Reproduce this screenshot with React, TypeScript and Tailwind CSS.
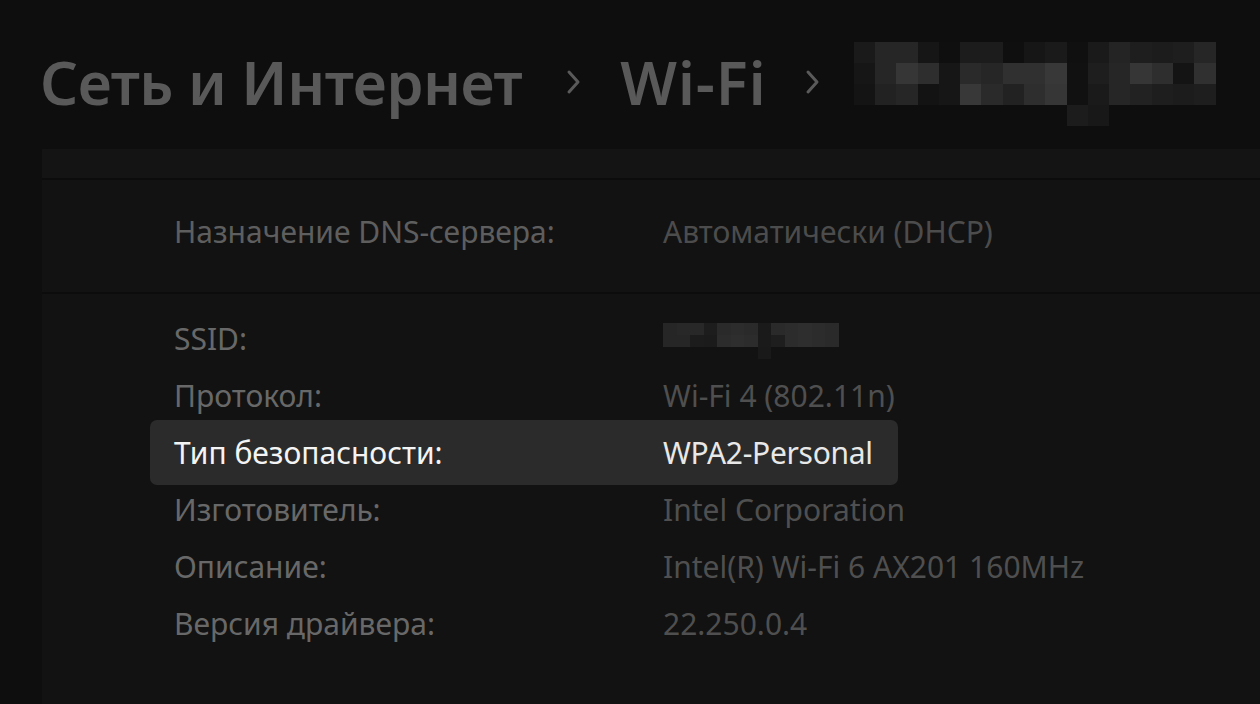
import React from 'react';

// пиксельная "замазка" имени сети в заголовке (17 x 3 + хвостик)
const headerBlur: string[][] = [
  ['#1a1a1a', '#262626', '#262626', '#161616', '#0f0f0f', '#1c1c1c', '#1c1c1c', '#0f0f0f', '#161616', '#1a1a1a', '#101010', '#1a1a1a', '#242424', '#1e1e1e', '#1c1c1c', '#1e1e1e', '#262626'],
  ['#161616', '#262626', '#363636', '#2e2e2e', '#161616', '#2a2a2a', '#262626', '#303030', '#303030', '#383838', '#111111', '#1e1e1e', '#262626', '#363636', '#2e2e2e', '#141414', '#303030'],
  ['#141414', '#222222', '#262626', '#131313', '#161616', '#383838', '#2a2a2a', '#222222', '#2e2e2e', '#363636', '#111111', '#1a1a1a', '#262626', '#222222', '#1e1e1e', '#1c1c1c', '#1e1e1e'],
  ['#0e0e0e', '#0e0e0e', '#0e0e0e', '#0e0e0e', '#0e0e0e', '#0e0e0e', '#0e0e0e', '#0e0e0e', '#0e0e0e', '#0e0e0e', '#1c1c1c', '#181818', '#0e0e0e', '#0e0e0e', '#0e0e0e', '#0e0e0e', '#0e0e0e'],
];

// то же для SSID
const ssidBlur: string[][] = [
  ['#262626', '#282828', '#282828', '#1d1d1d', '#2a2a2a', '#2c2c2c', '#2a2a2a', '#1a1a1a', '#2a2a2a', '#2c2c2c', '#2e2e2e', '#2c2c2c', '#2a2a2a'],
  ['#262626', '#262626', '#1c1c1c', '#1b1b1b', '#2c2c2c', '#2e2e2e', '#2c2c2c', '#1a1a1a', '#1e1e1e', '#2c2c2c', '#2e2e2e', '#2c2c2c', '#2a2a2a'],
  ['#121212', '#121212', '#121212', '#121212', '#121212', '#121212', '#121212', '#191919', '#121212', '#121212', '#121212', '#121212', '#121212'],
];

interface InfoRow {
  label: string;
  value?: string;
  active?: boolean;
}

const rows: InfoRow[] = [
  { label: 'SSID:' },
  { label: 'Протокол:', value: 'Wi-Fi 4 (802.11n)' },
  { label: 'Тип безопасности:', value: 'WPA2-Personal', active: true },
  { label: 'Изготовитель:', value: 'Intel Corporation' },
  { label: 'Описание:', value: 'Intel(R) Wi-Fi 6 AX201 160MHz' },
  { label: 'Версия драйвера:', value: '22.250.0.4' },
];

function Chevron() {
  return (
    <svg width="16" height="26" viewBox="0 0 16 26" fill="none" className="shrink-0">
      <path d="M3 3l9 10-9 10" stroke="#5a5a5a" strokeWidth={3} strokeLinecap="round" strokeLinejoin="round" />
    </svg>
  );
}

function PixelBlur({ grid, cellW, cellH }: { grid: string[][]; cellW: number; cellH: number }) {
  return (
    <div className="flex flex-col">
      {grid.map((row, r) => (
        <div key={r} className="flex">
          {row.map((c, i) => (
            <div key={i} style={{ width: cellW, height: cellH, backgroundColor: c }} />
          ))}
        </div>
      ))}
    </div>
  );
}

export default function App() {
  return (
    <div
      className="w-[1260px] h-[704px] overflow-hidden bg-[#0e0e0e]"
      style={{ fontFamily: '"Noto Sans", "Open Sans", sans-serif' }}
    >
      {/* хлебные крошки */}
      <div className="h-[149px] flex items-start pl-[40px] pt-[42px]">
        <div className="flex items-center h-[80px] text-[#595959] text-[59.5px] font-semibold tracking-[-0.5px] whitespace-nowrap">
          <span>Сеть и Интернет</span>
          <div className="ml-[44px] mr-[38px]"><Chevron /></div>
          <span className="tracking-[1px]">Wi-Fi</span>
          <div className="ml-[38px] mr-[33px]"><Chevron /></div>
          <div className="self-start">
            <PixelBlur grid={headerBlur} cellW={21.3} cellH={21} />
          </div>
        </div>
      </div>

      {/* карточка свойств */}
      <div className="ml-[42px] bg-[#121212]">
        <div className="h-[29px] bg-[#141414]" />
        <div className="h-[2px] bg-[#0c0c0c]" />
        <div className="h-[112px] flex items-center pl-[132px] pb-[10px] text-[30px] whitespace-nowrap">
          <span className="w-[489px] shrink-0 text-[#5e5e5e]">Назначение DNS-сервера:</span>
          <span className="text-[#4c4c4c]">Автоматически (DHCP)</span>
        </div>
        <div className="h-[2px] bg-[#0c0c0c]" />

        <div className="pl-[108px] pt-[16px] pb-[60px]">
          {rows.map((row) =>
            row.active ? (
              <div
                key={row.label}
                className="w-[748px] h-[65px] -my-[4px] flex items-center px-6 rounded-[7px] bg-[#2b2b2b] text-[30px] whitespace-nowrap"
              >
                <span className="w-[489px] shrink-0 text-[#f4f4f4]">{row.label}</span>
                <span className="text-[#e8e8e8] tracking-[-0.3px]">{row.value}</span>
              </div>
            ) : (
              <div key={row.label} className="h-[57px] flex items-center px-6 text-[30px] whitespace-nowrap">
                <span className="w-[489px] shrink-0 text-[#686868]">{row.label}</span>
                {row.value ? (
                  <span className="text-[#4f4f4f]">{row.value}</span>
                ) : (
                  <div className="pt-[4px]">
                    <PixelBlur grid={ssidBlur} cellW={13.5} cellH={12} />
                  </div>
                )}
              </div>
            )
          )}
        </div>
      </div>
    </div>
  );
}
